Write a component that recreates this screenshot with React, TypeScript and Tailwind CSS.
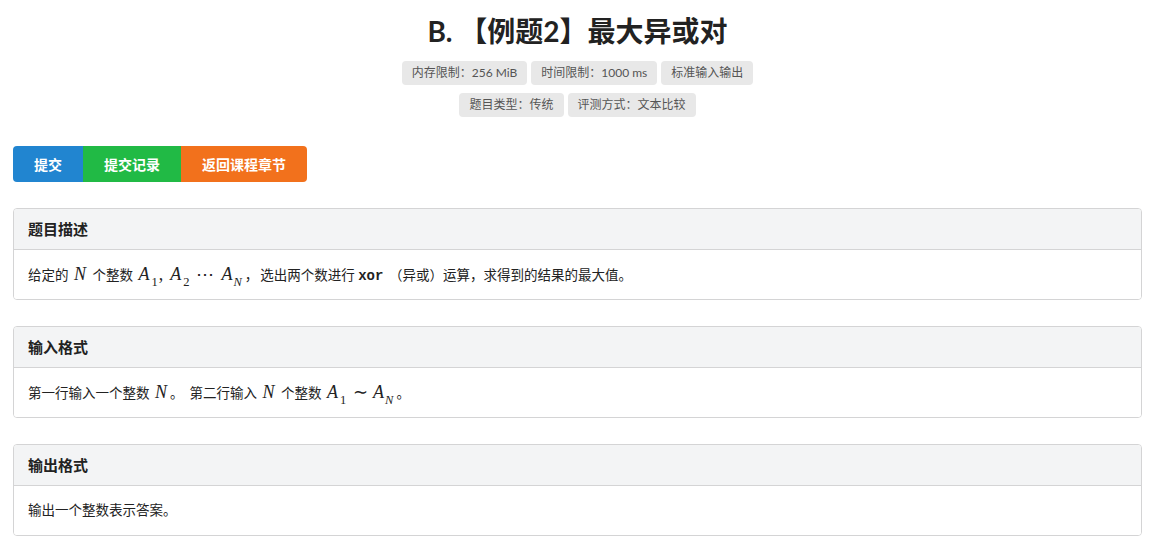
import React from "react";

const serif = { fontFamily: '"Liberation Serif", serif' };

const M = ({ children }: { children: React.ReactNode }) => (
  <span className="italic text-[18px] tracking-[1px] mx-[2px]" style={serif}>{children}</span>
);
const Sub = ({ children }: { children: React.ReactNode }) => (
  <sub className="text-[12.5px] not-italic align-[-3px] ml-[1px]">{children}</sub>
);
const SubI = ({ children }: { children: React.ReactNode }) => (
  <sub className="text-[12.5px] italic align-[-3px]">{children}</sub>
);

function Badge({ children }: { children: React.ReactNode }) {
  return (
    <span className="h-6 px-[10px] flex items-center rounded-[4px] bg-[#e8e8e8] text-[12px] text-[#555]">
      {children}
    </span>
  );
}

function Card({ title, children }: { title: string; children: React.ReactNode }) {
  return (
    <div className="border border-[#d4d4d5] rounded-[4px] overflow-hidden">
      <div className="h-[41px] bg-[#f3f4f5] border-b border-[#d4d4d5] px-[14px] flex items-center text-[15px] font-bold text-[#222]">
        {title}
      </div>
      <div className="h-[49px] px-[14px] flex items-center text-[13.5px] text-[#222] bg-white">{children}</div>
    </div>
  );
}

export default function App() {
  return (
    <div
      className="w-[1158px] h-[545px] bg-white pl-[13px] pr-[16px] pt-[13px] text-[#222] [text-spacing-trim:space-all]"
      style={{ fontFamily: 'Lato, "Noto Sans CJK SC", sans-serif' }}
    >
      <h1 className="text-center text-[28px] font-bold leading-[36px] text-[#222]">B. 【例题2】最大异或对</h1>
      <div className="flex flex-col items-center gap-2 mt-[12px]">
        <div className="flex gap-1">
          <Badge>内存限制：256 MiB</Badge>
          <Badge>时间限制：1000 ms</Badge>
          <Badge>标准输入输出</Badge>
        </div>
        <div className="flex gap-1">
          <Badge>题目类型：传统</Badge>
          <Badge>评测方式：文本比较</Badge>
        </div>
      </div>
      <div className="flex mt-[29px]">
        <button className="h-9 px-[21px] bg-[#2185d0] text-white text-[14px] font-bold rounded-l-[4px]">提交</button>
        <button className="h-9 px-[21px] bg-[#21ba45] text-white text-[14px] font-bold">提交记录</button>
        <button className="h-9 px-[21px] bg-[#f2711c] text-white text-[14px] font-bold rounded-r-[4px]">返回课程章节</button>
      </div>
      <div className="flex flex-col gap-[26px] mt-[26px]">
        <Card title="题目描述">
          <span>
            给定的 <M>N</M> 个整数 <M>A<Sub>1</Sub><span className="not-italic mr-[6px]">,</span>A<Sub>2</Sub><span className="not-italic mx-[6px]">⋯</span>A<SubI>N</SubI></M>，<span className="ml-[2px]">选出两个数进行</span>{" "}
            <span className="font-bold text-[14px]" style={{ fontFamily: '"Liberation Mono", monospace' }}>xor</span>
            {" "}<span className="ml-[2px]">（异或）运算，求得到的结果的最大值。</span>
          </span>
        </Card>
        <Card title="输入格式">
          <span>
            第一行输入一个整数 <M>N</M>。<span className="ml-[6px]">第二行输入</span> <M>N</M> 个整数 <M>A<Sub>1</Sub></M>{" "}
            <span className="text-[18px]" style={serif}>∼</span> <M>A<SubI>N</SubI></M>。
          </span>
        </Card>
        <Card title="输出格式">
          <span>输出一个整数表示答案。</span>
        </Card>
      </div>
    </div>
  );
}
